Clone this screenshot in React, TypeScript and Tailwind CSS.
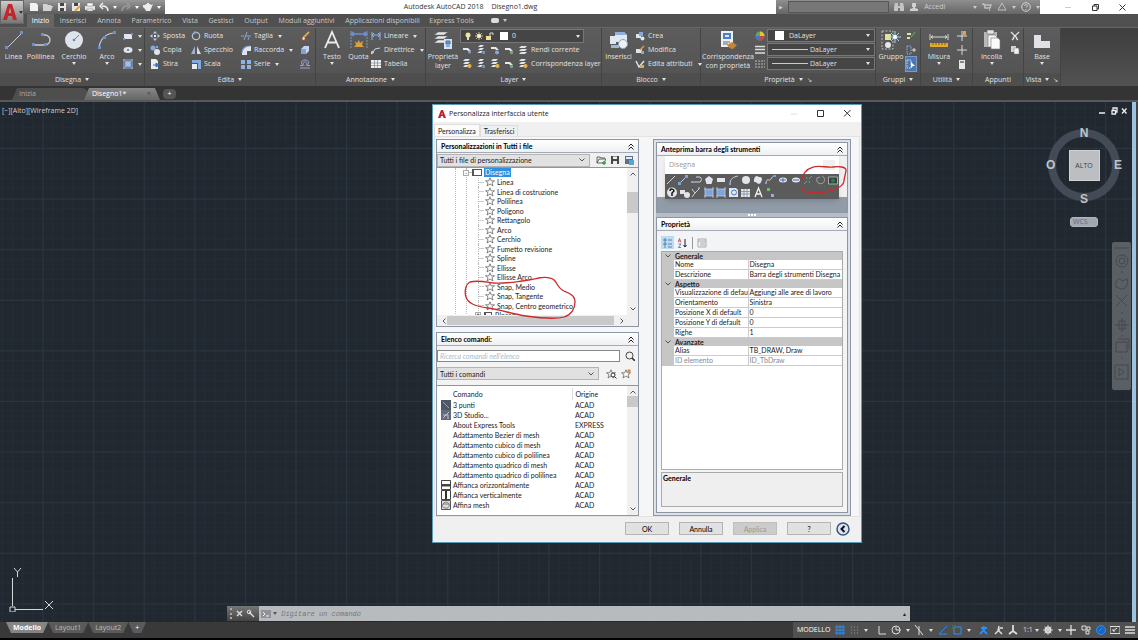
import React from 'react';

type IconName = keyof typeof icons;

const icons = {
  // drawing tools, 20x20
  linea: <><path d="M3 18 18 3" stroke="#c9cdd3" fill="none" /><path d="M1 16h3v3H1zM16 1h3v3h-3z" fill="#6d8fd0" /></>,
  polilinea: <><path d="M2 15h12a5 5 0 0 0 0-10h-3" stroke="#c9cdd3" strokeWidth="1.3" fill="none" /><path d="M1 13h3v3H1zM10 3h3v3h-3zM13 13h3v3h-3z" fill="#6d8fd0" /></>,
  cerchio: <><circle cx="10" cy="10" r="9" fill="#dfe3ea" /><path d="m10 10 5-5" stroke="#6283c8" fill="none" /><circle cx="10" cy="10" r="1.3" fill="#6283c8" /></>,
  arco: <><path d="M2 18C3 9 9 3 18 3" stroke="#c9cdd3" strokeWidth="1.2" fill="none" /><path d="M1 16h3v3H1zM16 1h3v3h-3zM6 6h3v3H6z" fill="#6d8fd0" /></>,
  testo: <path d="M3 18 10 2l7 16M5.500 12.500h9" stroke="#ececec" strokeWidth="1.800" fill="none" />,
  quota: <><path d="M2 1v17M18 1v17" stroke="#8b96a8" strokeDasharray="2 1" fill="none" /><path d="M2 4h16M5 2 2 4l3 2M15 2l3 2-3 2" stroke="#6b94e0" strokeWidth="1.300" fill="none" /><path d="m5 17 2-2-1-4 2 2 2-3 1 3 3-2-1 4 2 2z" fill="#d9a23c" /></>,
  proplayer: <><path d="M5 2h10l-4 3H1zM5 6h10l-4 3H1zM5 10h10l-4 3H1z" fill="#e8eaee" stroke="#565656" strokeWidth=".5" /><path d="M11 9h8v10h-8z" fill="#d7e4f3" /><path d="M13 11h4v3h-4zM13 16h4" stroke="#3d75b8" fill="#5f97d6" /></>,
  inserisci: <><path d="M1 6h6v8H1zM6 2h9l3 3v7H6z" fill="#dfe7f1" /><path d="M6 2h9l3 3H6z" fill="#8fb0dd" /><circle cx="14" cy="14" r="4.500" fill="#eef1f5" stroke="#8ea2bd" /><path d="M2 15h8v3H2z" fill="#9db9de" /></>,
  corrispondenza: <><path d="M3 1h12v16H3z" fill="#eceff3" /><path d="M5 3h8v6H5z" fill="#4c7fc4" /><path d="M7 5h4v2H7z" fill="#d8e8fb" /><path d="M5 12h7M5 14h5" stroke="#666" fill="none" /><path d="m9 15 5-3 5 3-4 4c-2 0-4-1-6-4z" fill="#c48438" /></>,
  gruppo: <><path d="M1 1h11v18H1z" stroke="#bdbdbd" strokeDasharray="2 1.500" fill="none" /><path d="M4 4h6v6H4z" fill="#dfe59e" /><circle cx="7" cy="15" r="3" fill="#e7e7e7" /><path d="M14 1v12M8 7h12M10 3l8 8M18 3l-8 8" stroke="#9fd3f5" fill="none" /><circle cx="14" cy="7" r="2" fill="#fff" /></>,
  misura: <><path d="M1 4v6M19 4v6M2 7h16M4 5.500 2 7l2 1.500M16 5.500 18 7l-2 1.500" stroke="#d8d8d8" fill="none" /><path d="M1 13h18v4H1z" fill="#e5a92e" /><path d="M4 13v2M7 13v2M10 13v2M13 13v2M16 13v2" stroke="#7d5a12" fill="none" /></>,
  incolla: <><path d="M2 2h13v15H2z" fill="#b8b8b8" /><path d="M5 0h7v4H5z" fill="#e5e5e5" stroke="#666" strokeWidth=".6" /><path d="M6 5h7l2 2v10H6z" fill="#f2f2f2" stroke="#777" strokeWidth=".6" /><path d="M9 8h7l2 2v9H9z" fill="#fafafa" stroke="#777" strokeWidth=".6" /></>,
  base: <path d="M2 5h7v6h9v7H2z" fill="#dfe1e4" />,
  // small tools, 10x10
  rett: <><path d="M1 3h8v5H1z" fill="#e2e6ec" /><path d="M0 7h2v2H0zM8 2h2v2H8z" fill="#6d8fd0" /></>,
  ellisse: <><ellipse cx="5" cy="5" rx="4.500" ry="3" fill="#e2e6ec" /><circle cx="5" cy="5" r="1" fill="#4c66a8" /></>,
  tratteggio: <><path d="M2 2h6v6H2z" fill="#86a9dd" /><path d="M1 0v10M9 0v10M0 1h10M0 9h10" stroke="#a9c3ec" strokeWidth=".8" fill="none" /><path d="m3 7 4-4M3 5l2-2M5 7l2-2" stroke="#dbe6f6" strokeWidth=".7" fill="none" /></>,
  sposta: <><path d="m5 0 2 2.500H3zM5 10 3 7.500h4zM0 5l2.500-2v4zM10 5 7.500 3v4z" fill="#b8cbe8" /><path d="M4 4h2v2H4z" fill="#e8e8e8" /></>,
  copia: <><circle cx="3" cy="3" r="2.500" fill="#86a9dd" /><circle cx="7" cy="7" r="3" fill="#e2e6ec" /><circle cx="7" cy="2" r="1.200" fill="#86a9dd" /></>,
  stira: <><path d="M1 0h5l2 2v8H1z" fill="#e9edf2" /><path d="M3 6h4M6 4l3 2-3 2z" stroke="#3e6fb5" fill="#3e6fb5" /></>,
  ruota: <><circle cx="5" cy="5" r="3.700" stroke="#b9c4d5" strokeWidth="1.200" fill="none" /><path d="m3 0 3 1.200-2.500 2z" fill="#86a9dd" /></>,
  specchio: <><path d="M4 1v8H0z" fill="#9ab3d8" /><path d="M6 1v8h4z" fill="#d6dae1" /></>,
  scala: <><path d="M1 1h9v9H7V4H1z" fill="#86a9dd" /><path d="M1 5h5v5H1z" fill="#e8ebf0" /></>,
  taglia: <path d="M0 5h3M5 5h5M3 9l3-8M7 9l1-3" stroke="#8ca6d2" fill="none" />,
  raccorda: <><path d="M1 10V7a7 7 0 0 1 7-6h2v5H6v4z" fill="#e2e6ec" /><path d="M1 8C1 4 4 1 9 1" stroke="#7aa0dc" strokeWidth="1.200" fill="none" /></>,
  serie: <path d="M0 1h4v4H0zM6 1h4v4H6zM0 6h4v4H0zM6 6h4v4H6z" fill="#8fb2e6" />,
  cancella: <><path d="m3 7 6-6" stroke="#e4a33b" strokeWidth="1.800" fill="none" /><path d="M0 9h8" stroke="#c8412e" fill="none" /><path d="m2 8 1.500-2L5 7.500 4 9z" fill="#eee" /></>,
  esplodi: <><path d="M1 4h5v5H1z" fill="#7ea4de" /><path d="m1 4 3-3h5L6 4zM6 4l3-3v5L6 9z" fill="#c5d5ee" /></>,
  offset: <path d="M0 9h10M0 6.500h3C0 3 2 1 5 1s5 2 2 5.500h3M4 6.500C2 4 4 3 5 3s3 1 1 3.500" stroke="#9bb2da" strokeWidth=".9" fill="none" />,
  lineare: <path d="M1 1v8M9 1v8M1 4h8M3 2 1 4l2 2M7 2l2 2-2 2" stroke="#8db1ee" fill="none" />,
  direttrice: <path d="m1 9 3-5 5-1M0 9l1-3 2 1z" stroke="#d0d4da" fill="none" />,
  tabella: <><path d="M0 1h10v8H0z" fill="#f0f0f0" /><path d="M0 4h10M0 6.500h10M3.500 1v8M6.500 1v8" stroke="#7f8795" strokeWidth=".7" fill="none" /></>,
  lay1: <><path d="M1 3h5l3 3H6L5 5H1z" fill="#e8e9ec" /><circle cx="7.500" cy="7" r="1.500" fill="#7da2db" /></>,
  lay2: <><path d="M4 0h4L6 2H2zM4 3h4L6 5H2zM4 6h3L5 8H1z" fill="#dfe3ea" /><path d="M7 6h2v3H6z" fill="#6794db" /></>,
  lay3: <><path d="M1 2h5l3 3H6L5 4H1z" fill="#e8e9ec" /><circle cx="7" cy="7.500" r="2" fill="#86a9dd" /></>,
  lay4: <><path d="M1 3h5l3 3H6L5 5H1z" fill="#e8e9ec" /><circle cx="7.500" cy="7.500" r="1.700" fill="#6fae7c" /></>,
  lay5: <path d="M3 1h6L7 3H1zM3 4h6L7 6H1zM3 7h6L7 9H1z" fill="#dfe3ea" />,
  lay6: <><path d="M3 0h5L6 2H1zM3 3h5L6 5H1zM3 6h4L5 8H1z" fill="#dfe3ea" /><circle cx="7.500" cy="7" r="2" fill="#e9b445" /></>,
  crea: <><path d="M1 3h5v4H1z" fill="#dfe3ea" /><path d="M4 1h4v4H4z" fill="#86a9dd" /><circle cx="7.500" cy="7.500" r="2" fill="#dfe3ea" /></>,
  modifica: <><path d="M1 4h6v4H1z" fill="#dfe3ea" /><path d="m5 5 4-4" stroke="#e29a45" strokeWidth="1.500" fill="none" /><path d="M6 6h3v3H6z" fill="#86a9dd" /></>,
  attributi: <><path d="m1 2 3 6 5-6" stroke="#dfe3ea" strokeWidth="1.500" fill="none" /><path d="M5 6h4v3H5z" fill="#d9ad56" /></>,
  colore: <><circle cx="5" cy="5" r="4.500" fill="#5faa57" /><path d="M5 5V.5A4.500 4.500 0 0 1 9.500 5z" fill="#e3c23b" /><path d="M5 5h4.500A4.500 4.500 0 0 1 5 9.500z" fill="#c84a3d" /><path d="M5 5v4.500A4.500 4.500 0 0 1 .5 5z" fill="#4b73c9" /></>,
  spessore: <path d="M0 1.500h10M0 4.500h10M0 8h10" stroke="#ddd" strokeWidth="1.500" fill="none" />,
  tipolinea: <path d="M0 2h10M0 5h10M0 8h10" stroke="#bbb" strokeDasharray="2 1" fill="none" />,
  gr1: <><path d="M1 2h4v2H1zM1 6h3v2H1z" fill="#dfe59e" /><path d="m5 6 4-5" stroke="#6fb06b" fill="none" /></>,
  gr2: <><path d="M1 1h4v8H1z" stroke="#8db1ee" strokeDasharray="1.500 1" fill="none" /><path d="M6 5h4M8 3v4" stroke="#ddd" fill="none" /></>,
  gr3: <><path d="M1 1h4v8H1z" stroke="#cfe1fa" strokeDasharray="1.500 1" fill="none" /><path d="m5 3 4 4H7l-2 2z" fill="#fff" /></>,
  puntoid: <><path d="M5 0v10M0 5h10" stroke="#ddd" fill="none" /><path d="M6 0h3v4H6z" fill="#e5a145" /></>,
  punto: <path d="M5 0v10M0 5h10" stroke="#d7d7d7" fill="none" />,
  calc: <><path d="M2 1h6v9H2z" fill="#e6e6e6" /><path d="M3 2h4v2H3z" fill="#888" /></>,
  forbici: <path d="m1 1 6 6M9 1 3 7M2 9l2-2M8 9 6 7" stroke="#e8e8e8" strokeWidth="1.200" fill="none" />,
  fogli: <><path d="M1 1h5v6H1z" fill="#d5d5d5" /><path d="M4 3h4l1 1v5H4z" fill="#f2f2f2" stroke="#777" strokeWidth=".5" /></>,
  // quick access
  nuovo: <path d="M1 1h6l2 2v6H1z" fill="#f2f2f2" />,
  apri: <path d="M0 2h4l1 1h3v1h2L8 9H0z" fill="#d2d2d2" />,
  salva: <><path d="M1 1h8v8H1z" fill="#e7e7e7" /><path d="M3 1h4v3H3zM3 6h4v3H3z" fill="#444" /></>,
  salvacon: <><path d="M1 1h8v8H1z" fill="#e7e7e7" /><path d="M3 1h4v3H3z" fill="#444" /><path d="m4 9 5-5" stroke="#dfa043" strokeWidth="1.800" fill="none" /></>,
  stampa: <><path d="M0 4h10v4H0z" fill="#e4e4e4" /><path d="M2 1h6v3H2zM2 7h6v2H2z" fill="#fafafa" stroke="#777" strokeWidth=".5" /></>,
  annulla: <path d="M9 9C9 5 6 4 3 4M4 1 1 4l3 3" stroke="#f0f0f0" strokeWidth="1.500" fill="none" />,
  ripeti: <path d="M1 9c0-4 3-5 6-5M6 1l3 3-3 3" stroke="#9b9b9b" strokeWidth="1.500" fill="none" />,
  teiera: <path d="M0 3h2l1-1h4l1 1 2-1-2 5-1 2H3L2 7 0 5zM4 1h2v1H4z" fill="#ececec" />,
  binocolo: <path d="M1 1h3v8H0V5zM6 1h3l1 4v4H6zM4 4h2v2H4z" fill="#c4c4c4" />,
  utente: <path d="M3 1h4v4H6v1l3 1v2H1V7l3-1V5H3z" fill="#d0d0d0" />,
  carrello: <path d="M0 2h2l1 4h5l1-3H3M4 8h0M7 8h1" stroke="#c0c0c0" strokeWidth="1.300" fill="none" />,
  autodesk: <path d="m5 1 4 7H1z" stroke="#c0c0c0" fill="none" />,
  aiuto: <><circle cx="5" cy="5" r="4.300" stroke="#d5d5d5" fill="none" /><path d="M3.500 4c0-2 3-2 3 0L5 5.500M5 7v1" stroke="#d5d5d5" fill="none" /></>,
  // dialog
  stella: <path d="m5 .8 1.200 3H9.500L7 5.700 8 9 5 7 2 9l1-3.300L.5 3.800h3.300z" stroke="#666" strokeWidth=".8" fill="#fff" />,
  cartella: <><path d="M1 8V2h3l1 1h4M1 8l2-4h7L8 8z" stroke="#444" fill="none" strokeWidth=".8" /><path d="M8 6v4M6 8h4" stroke="#31a03e" strokeWidth="1.300" fill="none" /></>,
  disco: <><path d="M1 1h8v8H1z" fill="#464646" /><path d="M3 1.500h4v2.500H3zM3 6h4v3H3z" fill="#eee" /></>,
  discotab: <><path d="M1 1h8v8H1z" fill="#5a7087" /><path d="M2 2h6v2H2z" fill="#e1edf7" /><path d="M5 5h5v5H5z" fill="#5aa4d4" /></>,
  lente: <><circle cx="4.500" cy="4.500" r="3.500" stroke="#444" fill="none" /><path d="m7 7 3 3" stroke="#333" strokeWidth="1.600" fill="none" /></>,
  mesh: <><path d="M0 0h10v10H0z" fill="#626a7c" /><path d="m2 8 6-6M2 5h5v4" stroke="#d8dbe4" fill="none" strokeWidth=".8" /></>,
  punti: <><path d="M0 0h10v10H0z" fill="#50566a" /><path d="m2 2 6 6" stroke="#8fa5d8" fill="none" /></>,
  orizz: <><path d="M.5.5h9v9h-9z" fill="#fff" stroke="#444" /><path d="M1 4h8v2.500H1z" fill="#444" /></>,
  vert: <><path d="M.5.5h9v9h-9z" fill="#fff" stroke="#444" /><path d="M4 1h2v8H4z" fill="#333" /></>,
  affina: <><path d="M.5.5h9v9h-9z" fill="#ddd" stroke="#555" /><path d="M2 4c2-3 5-2 6 0s-1 5-4 4-3-2-2-4m0 0 6 0" stroke="#555" strokeWidth=".7" fill="none" /></>,
  categorie: <path d="M1 1h2v2H1zM1 5h2v2H1zM5 2h4M5 6h4M1 9h2M5 9h4" stroke="#466c98" strokeWidth=".8" fill="none" />,
  az: <><path d="M7 1v8M5.500 7 7 9l1.500-2" stroke="#222" fill="none" /><path d="m0 4.500 1.500-4 1.500 4M.8 3h1.600" stroke="#b03030" strokeWidth=".7" fill="none" /><path d="M.5 6H3L.5 9.500H3" stroke="#3050a0" strokeWidth=".7" fill="none" /></>,
  pagina: <path d="M1 1h8v8H1zM1 3h8M3 5h5M3 7h5" stroke="#aaa" fill="none" />,
};

function Icon({ name, big, cls = '' }: { name: IconName; big?: boolean; cls?: string }) {
  return (
    <svg viewBox={big ? '0 0 20 20' : '0 0 10 10'} className={`shrink-0 ${big ? 'size-5' : 'size-[10px]'} ${cls}`} aria-hidden="true">
      {icons[name]}
    </svg>
  );
}

function Arrow({ cls = '' }: { cls?: string }) {
  return (
    <svg viewBox="0 0 4 3" className={`w-1 h-[3px] shrink-0 ${cls}`} aria-hidden="true">
      <path d="M0 0h4L2 3z" fill="currentColor" />
    </svg>
  );
}

function Big({ icon, label, arrow, cls = '' }: { icon: IconName; label: string; arrow?: boolean; cls?: string }) {
  return (
    <button className={`flex flex-col items-center shrink-0 pt-[2px] ${cls}`}>
      <Icon name={icon} big />
      <span className="mt-[2px] leading-[9px] whitespace-pre-line text-center">{label}</span>
      {arrow && <Arrow cls="mt-px" />}
    </button>
  );
}

function Small({ icon, label, arrow, active }: { icon: IconName; label?: string; arrow?: boolean; active?: boolean }) {
  return (
    <button className={`flex items-center h-[14px] gap-[3px] whitespace-nowrap ${active ? 'bg-[#4f76ad] outline outline-[#7a9ccc]' : ''}`} aria-label={label ? undefined : icon}>
      <Icon name={icon} />
      {label}
      {arrow && <Arrow cls="ml-[2px]" />}
    </button>
  );
}

function Col({ cls = '', children }: { cls?: string; children: React.ReactNode }) {
  return <div className={`flex flex-col items-start shrink-0 pt-px ${cls}`}>{children}</div>;
}

function Panel({ title, cls, arrow = true, corner, children }: { title: string; cls: string; arrow?: boolean; corner?: boolean; children: React.ReactNode }) {
  return (
    <section className={`flex flex-col shrink-0 border-r border-[#444] ${cls}`}>
      <div className="flex h-[45px]">{children}</div>
      <div className="flex items-center justify-center gap-1 h-[13px] bg-[#4e4e4e]">
        {title}
        {arrow && <Arrow />}
        {corner && <span className="text-[6px]">↘</span>}
      </div>
    </section>
  );
}

function LayerCombo({ label }: { label: string }) {
  return (
    <div className="flex items-center h-[13px] px-1 bg-[#454545] border border-[#777]">
      <span className={label === 'Colore' ? 'size-[9px] mx-[3px] bg-white' : 'w-9 h-px bg-[#ccc]'} />
      <select aria-label={label} className="grow appearance-none bg-transparent pl-[2px] outline-none">
        <option>DaLayer</option>
      </select>
      <Arrow />
    </div>
  );
}

const ribbonTabs = [
  ['Inizio', 'w-[27px]'], ['Inserisci', 'w-[38px]'], ['Annota', 'w-[34px]'], ['Parametrico', 'w-[51px]'],
  ['Vista', 'w-[26px]'], ['Gestisci', 'w-9'], ['Output', 'w-[34px]'], ['Moduli aggiuntivi', 'w-[67px]'],
  ['Applicazioni disponibili', 'w-[85px]'], ['Express Tools', 'w-[53px]'],
];

const treeItems = ['Linea', 'Linea di costruzione', 'Polilinea', 'Poligono', 'Rettangolo', 'Arco', 'Cerchio', 'Fumetto revisione', 'Spline', 'Ellisse', 'Ellisse Arco', 'Snap, Medio', 'Snap, Tangente', 'Snap, Centro geometrico'];

const commands: [string, string, IconName?][] = [
  ['3 punti', 'ACAD', 'punti'],
  ['3D Studio...', 'ACAD', 'mesh'],
  ['About Express Tools', 'EXPRESS'],
  ['Adattamento Bezier di mesh', 'ACAD'],
  ['Adattamento cubico di mesh', 'ACAD'],
  ['Adattamento cubico di polilinea', 'ACAD'],
  ['Adattamento quadrico di mesh', 'ACAD'],
  ['Adattamento quadrico di polilinea', 'ACAD'],
  ['Affianca orizzontalmente', 'ACAD', 'orizz'],
  ['Affianca verticalmente', 'ACAD', 'vert'],
  ['Affina mesh', 'ACAD', 'affina'],
];

const properties = [
  { group: 'Generale', rows: [['Nome', 'Disegna'], ['Descrizione', 'Barra degli strumenti Disegna']] },
  {
    group: 'Aspetto',
    rows: [['Visualizzazione di default', 'Aggiungi alle aree di lavoro'], ['Orientamento', 'Sinistra'], ['Posizione X di default', '0'], ['Posizione Y di default', '0'], ['Righe', '1']],
  },
  { group: 'Avanzate', rows: [['Alias', 'TB_DRAW, Draw'], ['ID elemento', 'ID_TbDraw']] },
];

function TitleBar() {
  return (
    <header className="flex h-[14px] bg-white shrink-0 text-[#333]">
      <div className="flex items-center w-[165px] pl-[29px] gap-1 bg-linear-to-b from-[#999] to-[#5c5c5c] text-white">
        <Icon name="nuovo" />
        <Icon name="apri" />
        <Icon name="salva" />
        <Icon name="salvacon" />
        <Icon name="stampa" />
        <Icon name="annulla" />
        <Arrow />
        <Icon name="ripeti" />
        <Arrow />
        <Icon name="teiera" />
        <Arrow />
      </div>
      <div className="flex grow items-center justify-center gap-2">
        <span>Autodesk AutoCAD 2018</span>
        <span>Disegno1.dwg</span>
      </div>
      <div className="flex items-center w-[264px] pl-[3px] gap-[5px] bg-linear-to-b from-[#8f8f8f] to-[#666] text-[#ccc]">
        <span className="text-[5px]">▶</span>
        <input aria-label="Cerca" className="w-[106px] h-3 bg-[#777] border border-[#555]" />
        <Icon name="binocolo" />
        <Icon name="utente" />
        <button className="w-[46px] text-left">Accedi</button>
        <Arrow />
        <Icon name="carrello" />
        <Icon name="autodesk" />
        <Arrow />
        <Icon name="aiuto" />
        <Arrow />
      </div>
      <div className="flex items-center justify-between w-[98px] pl-[25px] pr-[12px]">
        <svg viewBox="0 0 6 6" className="size-[6px]"><path d="M0 3.500h6" stroke="#ccc" /></svg>
        <svg viewBox="0 0 7 7" className="size-[7px]"><path d="M.5 2h4.500v4.500H.5zM2 2V.5h4.500V5H5" stroke="#333" fill="none" /></svg>
        <svg viewBox="0 0 7 7" className="size-[7px]"><path d="m.5.5 6 6M6.500.5l-6 6" stroke="#333" fill="none" /></svg>
      </div>
    </header>
  );
}

function Ribbon() {
  return (
    <>
      <nav className="flex items-center h-[13px] shrink-0 pl-[27px] bg-[#505050] text-[#c8c8c8]">
        {ribbonTabs.map(([label, width], i) => (
          <button key={label} className={`h-full shrink-0 whitespace-nowrap text-center ${width} ${i === 0 ? 'bg-[#666] text-white' : ''}`}>
            {label}
          </button>
        ))}
        <span className="ml-[13px] w-2 h-[5px] rounded-xs bg-[#ddd]" />
        <Arrow cls="ml-1" />
      </nav>
      <div className="flex h-[59px] shrink-0 bg-linear-to-b from-[#5c5c5c] to-[#525252] border-t border-[#666] text-[#e2e2e2]">
        <Panel title="Disegna" cls="w-[145px]">
          <Big icon="linea" label="Linea" cls="w-[27px]" />
          <Big icon="polilinea" label="Polilinea" cls="w-[27px]" />
          <Big icon="cerchio" label="Cerchio" arrow cls="w-10" />
          <Big icon="arco" label="Arco" arrow cls="w-[26px]" />
          <Col cls="pl-[3px]">
            <Small icon="rett" arrow />
            <Small icon="ellisse" arrow />
            <Small icon="tratteggio" arrow />
          </Col>
        </Panel>
        <Panel title="Edita" cls="w-[171px]">
          <Col cls="w-[46px] pl-[5px]">
            <Small icon="sposta" label="Sposta" />
            <Small icon="copia" label="Copia" />
            <Small icon="stira" label="Stira" />
          </Col>
          <Col cls="w-[50px]">
            <Small icon="ruota" label="Ruota" />
            <Small icon="specchio" label="Specchio" />
            <Small icon="scala" label="Scala" />
          </Col>
          <Col cls="w-[59px]">
            <Small icon="taglia" label="Taglia" arrow />
            <Small icon="raccorda" label="Raccorda" arrow />
            <Small icon="serie" label="Serie" arrow />
          </Col>
          <Col>
            <Small icon="cancella" />
            <Small icon="esplodi" />
            <Small icon="offset" />
          </Col>
        </Panel>
        <Panel title="Annotazione" cls="w-[110px]">
          <Big icon="testo" label="Testo" arrow cls="w-8" />
          <Big icon="quota" label="Quota" cls="w-[21px]" />
          <Col cls="pl-[2px]">
            <Small icon="lineare" label="Lineare" arrow />
            <Small icon="direttrice" label="Direttrice" arrow />
            <Small icon="tabella" label="Tabella" />
          </Col>
        </Panel>
        <Panel title="Layer" cls="w-[176px]">
          <Big icon="proplayer" label={'Proprietà\nlayer'} cls="w-[34px]" />
          <div className="pt-px">
            <div className="flex items-center w-[124px] h-[14px] px-[3px] gap-[2px] bg-[#454545] border border-[#777]">
              <svg viewBox="0 0 34 10" className="w-[34px] h-[10px] shrink-0">
                <circle cx="4" cy="4" r="2.500" fill="#f3e691" /><path d="M3 6h2v3H3z" fill="#ddd" />
                <path d="M15 1v8M11 5h8M12 2l6 6M18 2l-6 6" stroke="#e8d38a" strokeWidth=".8" /><circle cx="15" cy="5" r="2" fill="#fbf3ce" />
                <path d="M22 5h5v4h-5z" fill="#efe19a" /><path d="M26 5V2h3v2" stroke="#ddd" fill="none" />
              </svg>
              <span className="size-2 bg-white shrink-0" />
              <select aria-label="Layer corrente" className="grow appearance-none bg-transparent pl-[2px] outline-none">
                <option>0</option>
              </select>
              <Arrow />
            </div>
            <div className="flex gap-1 pl-[2px]">
              <Small icon="lay1" />
              <Small icon="lay2" />
              <Small icon="lay3" />
              <Small icon="lay4" />
              <Small icon="lay5" label="Rendi corrente" />
            </div>
            <div className="flex gap-1 pl-[2px]">
              <Small icon="lay6" />
              <Small icon="lay2" />
              <Small icon="lay6" />
              <Small icon="lay4" />
              <Small icon="lay6" label="Corrispondenza layer" />
            </div>
          </div>
        </Panel>
        <Panel title="Blocco" cls="w-[99px]">
          <Big icon="inserisci" label="Inserisci" cls="w-[33px]" />
          <Col>
            <Small icon="crea" label="Crea" />
            <Small icon="modifica" label="Modifica" />
            <Small icon="attributi" label="Edita attributi" arrow />
          </Col>
        </Panel>
        <Panel title="Proprietà" cls="w-[175px]" corner>
          <Big icon="corrispondenza" label={'Corrispondenza\ncon proprietà'} cls="w-[54px]" />
          <Col>
            <Small icon="colore" />
            <Small icon="spessore" />
            <Small icon="tipolinea" />
          </Col>
          <div className="flex flex-col grow gap-px pt-px pl-[2px]">
            <LayerCombo label="Colore" />
            <LayerCombo label="Spessore linea" />
            <LayerCombo label="Tipo di linea" />
          </div>
        </Panel>
        <Panel title="Gruppi" cls="w-[45px]">
          <Big icon="gruppo" label="Gruppo" cls="w-[30px]" />
          <Col>
            <Small icon="gr1" />
            <Small icon="gr2" />
            <Small icon="gr3" active />
          </Col>
        </Panel>
        <Panel title="Utilità" cls="w-[52px]">
          <Big icon="misura" label="Misura" arrow cls="w-9" />
          <Col>
            <Small icon="puntoid" />
            <Small icon="punto" />
            <Small icon="calc" />
          </Col>
        </Panel>
        <Panel title="Appunti" cls="w-[51px]" arrow={false}>
          <Big icon="incolla" label="Incolla" arrow cls="w-[37px]" />
          <Col>
            <Small icon="forbici" />
            <Small icon="fogli" />
          </Col>
        </Panel>
        <Panel title="Vista" cls="w-[37px]" corner>
          <Big icon="base" label="Base" arrow cls="w-[36px]" />
        </Panel>
        <div className="grow bg-linear-to-b from-[#3e3e3e] to-[#525252]" />
      </div>
    </>
  );
}

function PanelHeader({ title }: { title: string }) {
  return (
    <div className="flex items-center justify-between h-[13px] px-1 shrink-0 bg-linear-to-b from-white to-[#eef0f3] border-b border-[#a4abb5] font-bold text-black">
      {title}
      <svg viewBox="0 0 6 7" className="w-[6px] h-[7px]"><path d="m.5 3.500 2.500-2.500 2.500 2.500M.5 6.500 3 4l2.500 2.500" stroke="#222" fill="none" /></svg>
    </div>
  );
}

function GraySelect({ label, value, cls }: { label: string; value: string; cls: string }) {
  return (
    <div className={`flex items-center h-[13px] pr-1 bg-[#e1e1e1] border border-[#b4b4b4] ${cls}`}>
      <select aria-label={label} className="grow appearance-none bg-transparent pl-[2px] outline-none">
        <option>{value}</option>
      </select>
      <Chevron />
    </div>
  );
}

function Chevron({ cls = '' }: { cls?: string }) {
  return <svg viewBox="0 0 6 4" className={`w-[6px] h-1 shrink-0 ${cls}`}><path d="m.5.5 2.500 2.500L5.500.5" stroke="#555" fill="none" /></svg>;
}

function VScroll({ thumb }: { thumb: string }) {
  return (
    <div className="flex flex-col items-center justify-between w-[11px] py-1 shrink-0 bg-[#f0f0f0]">
      <Chevron cls="rotate-180" />
      <div className={`flex flex-col grow w-full ${thumb}`}><div className="w-full bg-[#c9c9c9] grow" /></div>
      <Chevron />
    </div>
  );
}

function TreePanel() {
  return (
    <section className="flex flex-col h-[188px] border border-[#8c96a5] bg-[#f0f0f0]">
      <PanelHeader title="Personalizzazioni in Tutti i file" />
      <div className="flex items-center h-[14px] shrink-0 gap-1 pr-1">
        <GraySelect label="File di personalizzazione" value="Tutti i file di personalizzazione" cls="w-[156px] mr-[2px]" />
        <Icon name="cartella" />
        <Icon name="disco" />
        <Icon name="discotab" />
      </div>
      <div className="flex h-[148px] shrink-0 border-t border-[#8c96a5] bg-white">
        <div className="grow pl-[18px] overflow-hidden">
          <div className="border-l border-dotted border-[#bbb] pl-[10px]">
            <ul className="grid auto-rows-fr h-[152px] border-l border-dotted border-[#bbb]">
              <li className="flex items-center -ml-[4px]">
                <span className="flex items-center justify-center size-[6px] border border-[#aaa] bg-white text-[6px] leading-none">-</span>
                <span className="w-[3px] h-px bg-[#bbb]" />
                <span className="w-[10px] h-[7px] mr-[2px] border border-l-2 border-[#555] bg-white" />
                <span className="px-px leading-[9px] bg-[#2f8fe0] text-white">Disegna</span>
              </li>
              {treeItems.map((item) => (
                <li key={item} className="flex items-center ml-[11px] gap-[2px] border-l border-dotted border-[#bbb]">
                  <span className="w-[5px] h-px -mr-[1px] bg-[#ccc]" />
                  <Icon name="stella" />
                  <span>{item}</span>
                </li>
              ))}
              <li className="flex items-center ml-[8px] gap-[3px]">
                <span className="flex items-center justify-center size-[6px] border border-[#aaa] bg-white text-[6px] leading-none">+</span>
                <span className="w-2 h-[7px] border border-l-2 border-[#555] bg-white" />
                Blocco
              </li>
            </ul>
          </div>
        </div>
        <VScroll thumb="pt-[16px] pb-[94px]" />
      </div>
      <div className="flex items-center justify-between grow px-1 bg-[#f0f0f0]">
        <Chevron cls="rotate-90" />
        <div className="w-[167px] h-[9px] mr-auto bg-[#c9c9c9]" />
        <Chevron cls="-rotate-90 mr-[9px]" />
      </div>
    </section>
  );
}

function CommandPanel() {
  return (
    <section className="flex flex-col grow border border-[#8c96a5] bg-[#f3f3f3]">
      <PanelHeader title="Elenco comandi:" />
      <div className="flex items-center gap-[5px] mt-[3px] h-[13px]">
        <input aria-label="Ricerca comandi" placeholder="Ricerca comandi nell'elenco" className="w-[183px] h-[12px] px-[2px] bg-white border border-[#888] italic placeholder-[#a8bccb] outline-none" />
        <Icon name="lente" />
      </div>
      <div className="flex items-center gap-1 mt-[5px] mb-[5px]">
        <GraySelect label="Categoria comandi" value="Tutti i comandi" cls="w-[162px] mr-[3px]" />
        <svg viewBox="0 0 11 10" className="w-[11px] h-[10px]">{icons.stella}<circle cx="7" cy="6" r="2" stroke="#333" fill="#fff" /><path d="m8.500 7.500 2 2" stroke="#333" /></svg>
        <svg viewBox="0 0 11 10" className="w-[11px] h-[10px]">{icons.stella}<circle cx="8" cy="2" r="1.800" fill="#e0912f" /></svg>
      </div>
      <div className="flex grow border-t border-[#8c96a5] bg-white">
        <div className="grow pl-1 pt-[2px]">
          <table className="w-full text-left">
            <thead>
              <tr className="h-[12px]">
                <th className="w-3 font-normal" />
                <th className="w-[119px] font-normal border-r border-[#ddd]">Comando</th>
                <th className="font-normal pl-[3px]">Origine</th>
              </tr>
            </thead>
            <tbody>
              {commands.map(([name, source, icon]) => (
                <tr key={name} className="h-[10px]">
                  <td>{icon && <Icon name={icon} />}</td>
                  <td className="leading-[10px] whitespace-nowrap">{name}</td>
                  <td className="leading-[10px] pl-[3px]">{source}</td>
                </tr>
              ))}
            </tbody>
          </table>
        </div>
        <VScroll thumb="pt-[2px] pb-[100px]" />
      </div>
    </section>
  );
}

function ToolbarPreview() {
  return (
    <div className="w-[174px] ml-2 bg-[#5b5b5b] shadow-md">
      <div className="flex items-center justify-between h-[18px] px-1 bg-white text-[#999] font-['Open_Sans',sans-serif]">
        Disegna
        <span className="w-3 h-[10px] bg-[#f0f0f0]" />
      </div>
      <svg viewBox="0 0 174 25" className="w-[174px] h-[25px]" aria-hidden="true">
        <g fill="none" stroke="#d0d4db">
          <path d="m2 10 8-8M14 10l8-8M27 8h8a3 3 0 0 0 0-5h-4M65 10c0-5 3-7 8-8M101 9c1-6 3-1 5-4s2-3 4-3M27 15l3 4 5-5M30 19l-3 4" />
        </g>
        <path d="M13 8h3v3h-3zM20 1h3v3h-3zM26 7h2v2h-2zM64 9h2v2h-2zM100 8h2v2h-2zM109 1h2v2h-2zM33 13h2v2h-2z" fill="#7fa0dc" />
        <g fill="#e2e6ec">
          <path d="m44 2 4 3-1.500 5h-5L40 5zM52 4h8v4h-8zM90 3c2-2 3 0 4 0s3 0 3 2-1 2-1 3-2 3-4 1-3 0-3-2 0-2 1-4zM15 16h5v4h-5zM76 15h9v8h-9z" />
          <circle cx="81" cy="6" r="4" />
          <circle cx="22" cy="21" r="3" />
          <circle cx="7" cy="18.500" r="5" />
          <ellipse cx="118" cy="6" rx="4" ry="2.500" />
          <ellipse cx="131" cy="6" rx="4" ry="2.500" />
        </g>
        <path d="M40 15h8v7h-8zM52 15h8v7h-8z" fill="#7fa4dc" />
        <path d="M40 13v11M48 13v11M39 15h10M39 22h10M52 13v11M60 13v11M51 15h10M51 22h10" stroke="#b8cdf0" strokeWidth=".8" />
        <path d="M64 14h7l2 2v7h-9z" fill="#dfe7f3" />
        <circle cx="69" cy="18.500" r="2.500" stroke="#4c78c4" fill="none" />
        <path d="M5 17c0-3 4-2 4 0L7 19v3" stroke="#111" strokeWidth="1.500" fill="none" />
        <path d="M118 4v4M115 6h6M128 6h6" stroke="#4468b5" />
        <path d="M76 17.500h9M76 20h9M79 15v8M82 15v8" stroke="#6d7685" strokeWidth=".6" />
        <path d="m90 23 3.500-9 3.500 9M91 20h5" stroke="#f3f3f3" strokeWidth="1.300" fill="none" />
        <path d="M102 14h3v3h-3z" fill="#71bf63" />
        <path d="M106 20h3v3h-3z" fill="#8fb2e6" />
        <path d="m139 10 8-8M141 3l4 6" stroke="#8b9a8e" fill="none" />
        <path d="M152 4a4 4 0 1 0 5-2M152 4l3-1" stroke="#9aa49b" fill="none" />
        <path d="M163.500 3h9v7h-9z" fill="#31463a" stroke="#aaa" />
        <circle cx="143" cy="6" r="1.500" fill="#2f7a45" />
        <circle cx="168" cy="6.500" r="2" fill="#2f7a45" />
      </svg>
    </div>
  );
}

function PropertyPanel() {
  return (
    <section className="flex flex-col w-[198px] h-[377px] p-[2px] border border-[#8c96a5] bg-[#dde2e8]">
      <div className="flex flex-col h-[71px] shrink-0 border border-[#8c96a5] bg-linear-to-b from-[#f0f0f0] from-78% to-[#919ca8] to-78%">
        <PanelHeader title="Anteprima barra degli strumenti" />
        <ToolbarPreview />
      </div>
      <div className="flex items-center justify-center gap-px h-1 shrink-0 bg-[#b4bdc8]">
        <i className="size-[2px] bg-white" /><i className="size-[2px] bg-white" /><i className="size-[2px] bg-white" />
      </div>
      <div className="flex flex-col grow border border-[#8c96a5] bg-[#f2f4f6]">
        <PanelHeader title="Proprietà" />
        <div className="flex items-center h-[13px] mt-[5px] ml-[4px] gap-1">
          <button className="flex items-center justify-center w-[13px] h-[13px] bg-[#bcdcf4]" aria-label="Per categoria"><Icon name="categorie" /></button>
          <button aria-label="Alfabetico"><Icon name="az" /></button>
          <span className="w-px h-3 bg-[#999]" />
          <Icon name="pagina" />
        </div>
        <div className="grow mx-[4px] mt-[2px] border border-[#aaa] bg-white">
          <table className="w-full table-fixed text-[#222]">
            <colgroup>
              <col className="w-3" />
              <col className="w-[74px]" />
              <col />
            </colgroup>
            {properties.map(({ group, rows }) => (
              <tbody key={group}>
                <tr className="h-2 bg-[#c6c6c6]">
                  <td className="pl-[3px]"><Chevron /></td>
                  <th colSpan={2} className="pl-px leading-[8px] text-left">{group}</th>
                </tr>
                {rows.map(([name, value]) => (
                  <tr key={name} className={`h-[9px] ${name === 'ID elemento' ? 'text-[#888]' : ''}`}>
                    <td className="bg-[#c6c6c6]" />
                    <td className="pl-px leading-[9px] whitespace-nowrap overflow-hidden border-r border-b border-[#ccc]">{name}</td>
                    <td className="pl-px leading-[9px] whitespace-nowrap overflow-hidden border-b border-[#ccc]">{value}</td>
                  </tr>
                ))}
              </tbody>
            ))}
          </table>
        </div>
        <div className="h-[35px] mx-[4px] mt-[2px] mb-[5px] px-px leading-[10px] border border-[#aaa] bg-[#efefef] font-bold text-black">Generale</div>
      </div>
    </section>
  );
}

function Dialog() {
  return (
    <div role="dialog" aria-label="Personalizza interfaccia utente" className="absolute left-[432px] top-[2px] w-[430px] h-[439px] flex flex-col border border-[#5d9ab8] bg-[#f0f0f0] text-[#222] font-['Lato',Arial,sans-serif]">
      <div className="flex items-center h-[17px] shrink-0 pl-[5px] pr-[10px] bg-white font-['Open_Sans',sans-serif]">
        <svg viewBox="0 0 8 8" className="size-2 mr-[3px]"><path d="M3 0h2l3 8H5.500L5 6H3l-.5 2H0zM4 2.500 3.400 4.500h1.200z" fill="#bf2328" /></svg>
        <span className="grow">Personalizza interfaccia utente</span>
        <svg viewBox="0 0 60 7" className="w-[60px] h-[7px]"><path d="M0 4h6" stroke="#ddd" /><path d="M26.500.5h6v6h-6zM53 0l6.500 6.500M59.500 0 53 6.500" stroke="#333" fill="none" /></svg>
      </div>
      <div className="flex items-end h-[14px] shrink-0 pl-px">
        <button className="h-3 px-[3px] bg-[#fbfbfb] border border-b-0 border-[#ddd]">Personalizza</button>
        <button className="h-[11px] px-[3px] border border-b-0 border-[#ddd]">Trasferisci</button>
      </div>
      <div className="flex grow gap-[14px] mx-[1px] px-px pt-[2px] border border-[#e3e3e3] bg-[#f5f6f7]">
        <div className="flex flex-col gap-[5px] w-[203px] h-[377px]">
          <TreePanel />
          <CommandPanel />
        </div>
        <PropertyPanel />
      </div>
      <div className="flex items-start justify-end gap-[10px] h-[26px] shrink-0 pt-[5px] pr-[11px] text-black">
        <button className="w-[44px] h-[13px] bg-[#e1e1e1] border border-[#b5b5b5]">OK</button>
        <button className="w-[44px] h-[13px] bg-[#e1e1e1] border border-[#b5b5b5]">Annulla</button>
        <button disabled className="w-[44px] h-[13px] bg-[#ccc] border border-[#bfbfbf] text-[#999]">Applica</button>
        <button className="w-[44px] h-[13px] bg-[#e1e1e1] border border-[#b5b5b5]">?</button>
        <button aria-label="Riduci" className="-ml-[5px]">
          <svg viewBox="0 0 14 14" className="size-[14px]"><circle cx="7" cy="7" r="6" fill="#dbe4f0" stroke="#3a5482" strokeWidth="1.500" /><path d="M8.500 4 5.500 7l3 3" stroke="#111" strokeWidth="2" fill="none" /></svg>
        </button>
      </div>
      {/* red pen marks */}
      <svg viewBox="0 0 428 437" className="absolute inset-0 w-full h-full pointer-events-none" aria-hidden="true">
        <path d="M37 177c8-2 16 0 24 1s20-1 28-2 12-2 17-3 13-1 16 3 4 8 9 10 11 4 11 11-4 13-11 15-24 1-38-1-24-6-38-8-20-5-22-11 0-13 4-15zM368 77c1-7 5-13 12-15s14 1 20 0 13 0 13 3-2 8-2 11-4 7-11 9-10 3-17 3-13-1-15-5" fill="none" stroke="#cf2a2a" strokeWidth="1.300" />
      </svg>
    </div>
  );
}

function Canvas() {
  return (
    <main className="relative grow overflow-hidden bg-[#212830] border-r-2 border-[#444]">
      <svg className="absolute inset-0 w-full h-full" aria-hidden="true">
        <defs>
          <pattern id="minor" x="2" y="5" width="10.120" height="10.120" patternUnits="userSpaceOnUse">
            <path d="M.5 0v10.120M0 .5h10.120" stroke="#242c35" fill="none" />
          </pattern>
          <pattern id="major" x="42.500" y="46" width="50.600" height="50.600" patternUnits="userSpaceOnUse">
            <path d="M.5 0v50.600M0 .5h50.600" stroke="#2b3641" fill="none" />
          </pattern>
        </defs>
        <rect width="100%" height="100%" fill="url(#minor)" />
        <rect width="100%" height="100%" fill="url(#major)" />
      </svg>
      <p className="absolute left-[2px] top-1 text-[#d0d0d0]">[−][Alto][Wireframe 2D]</p>
      <div className="absolute right-0 top-0 w-1 h-full bg-[#9cc3e0]" />
      <svg viewBox="0 0 28 8" className="absolute right-[9px] top-[5px] w-7 h-2" aria-hidden="true">
        <path d="M0 6h6M13 3.500h3.500V7H13zM14 3V1h4v4h-1M23 1.500l4.500 5M27.500 1.500l-4.500 5" stroke="#eee" strokeWidth="1.300" fill="none" />
      </svg>

      <Dialog />

      <div className="absolute right-[10px] top-[21px] w-[84px] h-[84px] grid place-items-center text-[12px] leading-none font-bold text-[#bfc4ca] font-['Liberation_Sans',sans-serif]">
        <div className="absolute inset-[6px] rounded-full border-[8px] border-[#454b56]" />
        <span className="absolute top-[4px]">N</span>
        <span className="absolute bottom-[2px]">S</span>
        <span className="absolute left-[4px]">O</span>
        <span className="absolute right-[4px]">E</span>
        <div className="relative grid place-items-center size-[31px] bg-[#bcbec1] border border-[#cfd1d3] text-[7px] text-[#444] font-normal font-['Open_Sans',sans-serif]">ALTO</div>
      </div>
      <button className="absolute right-[38px] top-[115px] w-7 h-[10px] rounded-[3px] bg-[#a3a7b2] border border-[#b0b4be] leading-[8px] text-left pl-[2px] text-[#666b76]">WCS</button>
      <svg viewBox="0 0 19 148" className="absolute right-[5px] top-[140px] w-[19px] h-[148px]" aria-hidden="true">
        <rect width="19" height="148" rx="2" fill="#5a5f64" />
        <g stroke="#44494e" fill="none">
          <path d="M2 6h15" />
          <circle cx="10" cy="19" r="6" /><circle cx="10" cy="19" r="3" />
          <path d="M4 45c-1-8 4-10 6-6l5-2c2 5-1 10-6 10zM4 53l11 11M15 53 4 64M10 76v14M3 83h14M7 79h6v8H7zM4 100h11v10H4zM6 97h11v10M3 123h13v14H3zM7 126v8l5-4zM9 30h2M9 71h2M9 94h2M9 116h2" />
        </g>
      </svg>

      <svg viewBox="0 0 60 50" className="absolute left-0 bottom-[10px] w-[60px] h-[50px]" aria-hidden="true">
        <path d="M12.500 44V16M15 47.500h28M10 45h5v5h-5zM14 6l3.500 4L21 6M17.500 10v5M45 39l8 8M53 39l-8 8" stroke="#d5d8db" fill="none" />
      </svg>

      <div className="absolute left-[20%] right-[226px] bottom-px flex items-center h-[15px] bg-[#b8bbbe]">
        <div className="flex items-center justify-between w-8 h-full px-[3px] shrink-0 bg-linear-to-b from-[#777] to-[#444] text-white">
          <span className="h-[11px] border-l-2 border-dotted border-[#aaa]" />
          <svg viewBox="0 0 22 9" className="w-[22px] h-[9px]"><path d="m3 2 5 5M8 2 3 7M15 3l5 5" stroke="#ddd" strokeWidth="1.400" fill="none" /><circle cx="15" cy="3" r="1.800" stroke="#ddd" fill="none" /></svg>
        </div>
        <svg viewBox="0 0 10 8" className="w-[10px] h-2 mx-[2px]"><path d="M0 0h10v8H0z" fill="#8f9398" /><path d="m2 2 2 2-2 2M5 6h3" stroke="#eee" fill="none" /></svg>
        <Arrow cls="text-[#555]" />
        <input aria-label="Riga di comando" placeholder="Digitare un comando" className="grow h-full px-1 italic outline-none placeholder-[#777] font-['Liberation_Mono',monospace]" />
        <span className="px-[3px] text-[5px] text-[#222]">▲</span>
      </div>
    </main>
  );
}

function Status({ cls = '', children }: { cls?: string; children: React.ReactNode }) {
  return <svg viewBox="0 0 10 10" className={`size-[10px] shrink-0 ${cls}`} fill="none" stroke="currentColor" aria-hidden="true">{children}</svg>;
}

function Footer() {
  const tab = 'h-[11px] px-[7px] [clip-path:polygon(0_0,100%_0,calc(100%-5px)_100%,5px_100%)]';
  return (
    <footer className="flex justify-between h-[18px] shrink-0 bg-[#393939] border-b-2 border-black text-[#bbb]">
      <div className="flex pl-[6px]">
        <button className={`${tab} bg-[#858585] font-bold text-white`}>Modello</button>
        <button className={`${tab} bg-[#5a5a5a]`}>Layout1</button>
        <button className={`${tab} bg-[#5a5a5a]`}>Layout2</button>
        <button className={`${tab} bg-[#5a5a5a] text-white`}>+</button>
      </div>
      <div className="flex items-center w-[345px] pl-[4px] pr-[3px] justify-between bg-[#505050] text-[#ddd]">
        <span className="text-white">MODELLO</span>
        <Status cls="text-[#2f8df0]"><path d="M2 0v10M5 0v10M8 0v10M0 2h10M0 5h10M0 8h10" /></Status>
        <Status cls="text-[#999]"><path d="M1 2h9M1 5h9M1 8h9" strokeDasharray="1 2" /></Status>
        <Arrow />
        <Status cls="ml-1"><path d="M2 1v8h7" /></Status>
        <Status><circle cx="5" cy="5" r="4" /><path d="M5 5h5M5 5V2" /></Status>
        <Arrow />
        <Status><path d="m1 0 8 10M5 1v9" /></Status>
        <Arrow />
        <Status cls="text-[#2f8df0]"><path d="M9 9H1l8-8" /></Status>
        <Status cls="text-[#2f8df0]"><path d="M2 2h7v7H2z" /><path d="M0 0h3v3H0z" stroke="#2a8a45" /></Status>
        <Arrow />
        <Status cls="ml-1 text-[#2f8df0]"><path d="m5 1-1 5-3 3M5 3v3l3 3M2 3h6" strokeWidth="1.800" /></Status>
        <Status><path d="m5 1-1 5-3 3M5 3v3l3 3M6 3h3" strokeWidth="1.500" /></Status>
        <Status><path d="M5 0v6L1 9M5 6l4 3" strokeWidth="1.800" /></Status>
        <span className="flex items-center gap-[2px]">1:1 <Arrow /></span>
        <Status><circle cx="5" cy="5" r="2.500" strokeWidth="2" /><path d="M5 0v10M0 5h10M1.500 1.500l7 7M8.500 1.500l-7 7" strokeWidth=".8" /></Status>
        <Arrow />
        <Status><path d="M5 0v10M0 5h10" strokeWidth="1.300" /></Status>
        <Status><path d="M1 1h4v4H1zM6 2h3v3H6zM5 6h3v3H5z" /></Status>
        <Status cls="text-[#2f8df0]"><circle cx="5" cy="5" r="4.500" fill="#1567c4" /><path d="m3 6 3-3" /></Status>
        <Status><path d="M0 1.500h10v7H0zM3 6l4-3M3 4v2h2" /></Status>
        <Status><path d="M0 2h10M0 5h10M0 8h10" strokeWidth="1.500" /></Status>
      </div>
    </footer>
  );
}

export default function App() {
  return (
    <div className="relative flex flex-col h-screen w-full overflow-hidden bg-[#393939] text-[7px] leading-[10px] font-['Open_Sans','Noto_Sans',sans-serif]">
      <TitleBar />
      <Ribbon />
      <div className="flex items-end h-[16px] shrink-0 pl-3 bg-[#343434] border-b-2 border-[#585858] text-[#aaa]">
        <button className="w-[76px] h-[12px] pl-[7px] text-left rounded-t-md bg-[#4e4e4e] [clip-path:polygon(5px_0,100%_0,100%_100%,0_100%)]">Inizia</button>
        <button className="flex items-center justify-between w-[76px] h-[12px] -ml-[4px] pl-2 pr-[9px] rounded-t-md bg-linear-to-b from-[#888] to-[#666] text-white [clip-path:polygon(5px_0,calc(100%-5px)_0,100%_100%,0_100%)]">
          Disegno1*<span className="text-[#444]">×</span>
        </button>
        <button aria-label="Nuovo disegno" className="flex items-center justify-center w-[13px] h-[10px] ml-[3px] mb-px rounded bg-[#555] text-white">+</button>
      </div>
      <Canvas />
      <Footer />
      <button aria-label="Menu applicazione" className="absolute left-0 top-0 flex items-center justify-center w-6 h-6 gap-px bg-linear-to-b from-[#ccc] to-[#777] border border-[#666]">
        <svg viewBox="0 0 16 18" className="w-4 h-[18px]"><path d="M1 17 6 1h4l5 16h-4l-1-4H6l-1 4zM8 4.500 6.700 10h2.600z" fill="#c4262b" /></svg>
        <Arrow cls="text-[#333]" />
      </button>
    </div>
  );
}
